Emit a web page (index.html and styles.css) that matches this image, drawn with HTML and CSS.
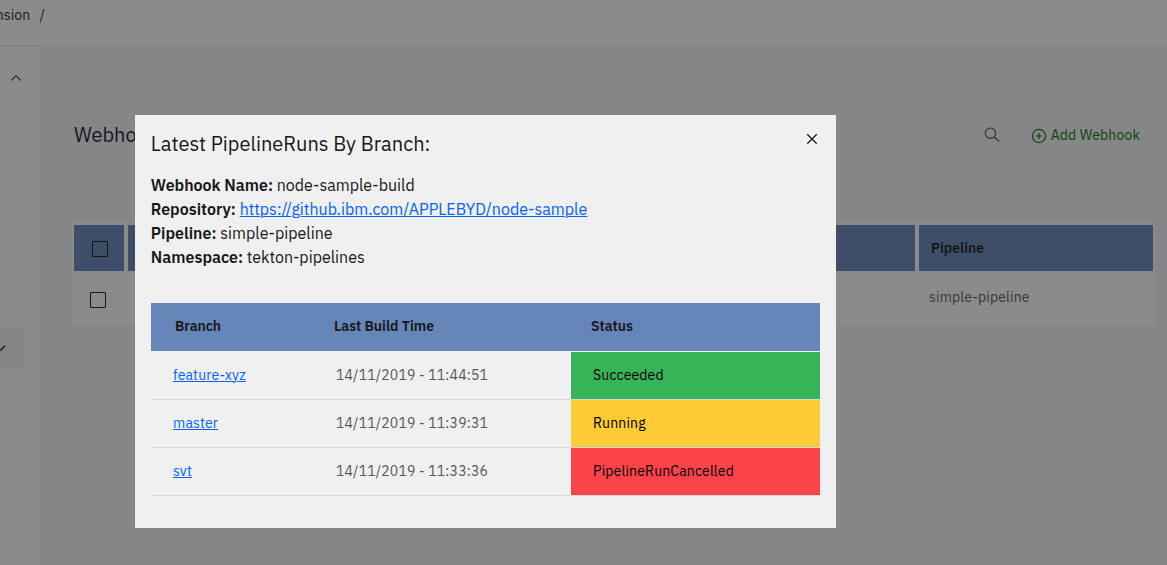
FILE: index.html
```html
<!DOCTYPE html>
<html lang="en">
<head>
<meta charset="utf-8">
<title>Webhooks</title>
<link rel="stylesheet" href="styles.css">
</head>
<body>
<div class="app">
  <header class="topbar"><span class="crumb">nsion</span><span class="slash">/</span></header>
  <div class="body">
    <nav class="sidebar">
      <svg class="chev-up" width="10" height="6" viewBox="0 0 10 6"><path d="M0 5.5 5 .7l5 4.8"/></svg>
      <div class="nav-select"><svg width="5" height="7" viewBox="0 0 5 7"><path d="M0 5.8 5 .8"/></svg></div>
    </nav>
    <main class="main">
      <div class="heading">
        <h1 class="page-title">Webho</h1>
        <div class="actions">
          <svg class="search" width="16" height="16" viewBox="0 0 16 16"><circle cx="6.5" cy="6.2" r="5.2"/><path d="m10.3 10 4.9 4.7"/></svg>
          <button class="add"><svg width="16" height="16" viewBox="0 0 16 16"><circle cx="8" cy="8" r="6.6"/><path d="M5 8h6M8 5v6"/></svg><span>Add Webhook</span></button>
        </div>
      </div>
      <div class="grid">
        <div class="cell head"><i class="box"></i></div>
        <div class="cell head"></div>
        <div class="cell head"><span class="head-label">Pipeline</span></div>
        <div class="cell"><i class="box"></i></div>
        <div class="cell"></div>
        <div class="cell"><span class="value">simple-pipeline</span></div>
      </div>
    </main>
  </div>
</div>
<div class="overlay">
  <section class="modal" role="dialog">
    <div class="modal-top">
      <h2 class="modal-title">Latest PipelineRuns By Branch:</h2>
      <svg class="close" width="10" height="10" viewBox="0 0 10 10"><path d="m.3.3 9.4 9.4M9.7.3.3 9.7"/></svg>
    </div>
    <div class="details">
      <div class="line"><b>Webhook Name:</b><span>node-sample-build</span></div>
      <div class="line"><b>Repository:</b><a>https://github.ibm.com/APPLEBYD/node-sample</a></div>
      <div class="line"><b>Pipeline:</b><span>simple-pipeline</span></div>
      <div class="line"><b>Namespace:</b><span>tekton-pipelines</span></div>
    </div>
    <div class="runs">
      <div class="row row-head"><span class="first">Branch</span><span>Last Build Time</span><span>Status</span></div>
      <div class="row"><div class="branch"><a>feature-xyz</a></div><div class="time">14/11/2019 - 11:44:51</div><div class="status ok">Succeeded</div></div>
      <div class="row"><div class="branch"><a>master</a></div><div class="time">14/11/2019 - 11:39:31</div><div class="status run">Running</div></div>
      <div class="row"><div class="branch"><a>svt</a></div><div class="time">14/11/2019 - 11:33:36</div><div class="status fail">PipelineRunCancelled</div></div>
    </div>
  </section>
</div>
</body>
</html>
```
FILE: styles.css
```css
* { box-sizing: border-box; }
body {
  margin: 0;
  height: 565px;
  overflow: hidden;
  font-family: "IBM Plex Sans", Roboto, sans-serif;
  font-size: 14px;
  color: #171717;
}
svg { fill: none; stroke: currentColor; flex: none; display: block; }
.app { height: 565px; display: flex; flex-direction: column; background: #fff; }
.topbar { height: 45px; padding-top: 6px; line-height: 18px; display: flex; gap: 9px; }
.crumb { margin-left: -4.3px; letter-spacing: .12px; }
.body { flex: 1; display: flex; }
.sidebar { width: 40px; border-top: 1px solid #dcdcdc; display: flex; flex-direction: column; }
.chev-up { margin: 29px 0 0 11px; color: #464646; stroke-width: 1.2; }
.nav-select { margin-top: 247px; width: 24px; height: 40px; background: #f0f0f0; padding-top: 17px; }
.nav-select svg { stroke-width: 1.4; }
.main { flex: 1; background: #f3f4f7; padding: 75px 12px 0 32px; }
.heading { display: flex; justify-content: space-between; height: 103px; padding: 0 15px 0 2px; }
.page-title { margin: 0; font-size: 20px; line-height: 30px; font-weight: 400; }
.actions { display: flex; align-items: center; height: 30px; gap: 31px; }
.search { color: #464646; stroke-width: 1.1; }
.add { display: flex; align-items: center; gap: 4px; border: 0; padding: 0; background: none; color: #037003; font: inherit; letter-spacing: .16px; }
.add svg { margin-top: 1px; stroke-width: 1.2; }
.grid { display: grid; grid-template-columns: 50px 787px 234px; column-gap: 4px; grid-template-rows: 46px 53px; padding: 2px; background: #fff; }
.cell { display: flex; align-items: center; padding: 0 10px 0 10px; color: #565656; }
.cell:first-child, .cell:nth-child(4) { padding-left: 16px; }
.head { background: #6685b9; color: #171717; padding-left: 12px; }
.cell:first-child { padding-left: 18px; padding-top: 2px; }
.cell:nth-child(4) { padding-top: 5px; }
.cell:last-child { padding-bottom: 2px; letter-spacing: .16px; }
.box { width: 16px; height: 16px; border: 1px solid #171717; border-radius: 1px; }
.head-label { font-weight: 600; }
.overlay { position: absolute; inset: 0; background: rgba(23, 23, 23, .5); padding: 115px 0 0 135px; }
.modal { width: 701px; height: 413px; background: #f0f0f0; padding: 16px; }
.modal-top { display: flex; justify-content: space-between; height: 42px; }
.modal-title { margin: 0 0 0 -.2px; font-size: 20px; line-height: 26px; font-weight: 400; }
.close { margin: 3px 3px 0 0; stroke-width: 1.3; }
.details { height: 130px; margin-left: -.2px; font-size: 16px; line-height: 24px; }
.line { display: flex; gap: 3.7px; height: 24px; }
.line b { font-weight: 600; }
a { color: #0062ff; text-decoration: underline; text-decoration-thickness: 1px; text-underline-offset: 1px; }
.row { display: grid; grid-template-columns: 185px 235px 249px; height: 48px; align-items: center; border-bottom: 1px solid #d8d8d8; letter-spacing: .16px; }
.row-head { grid-template-columns: 183px 257px 229px; background: #6685b9; border: 0; font-weight: 600; padding-bottom: 2px; letter-spacing: 0; }
.first { padding-left: 24px; }
.row-head + .row { height: 49px; border-top: 1px solid #f0f0f0; }
.branch { padding: 0 0 2px 22px; }
.time { color: #565656; padding-bottom: 2px; }
.status { height: 100%; display: flex; align-items: center; padding: 0 0 2px 22px; color: #000; }
.ok { background: #37b458; }
.run { background: #fdcb35; }
.fail { background: #fb4449; }
```
